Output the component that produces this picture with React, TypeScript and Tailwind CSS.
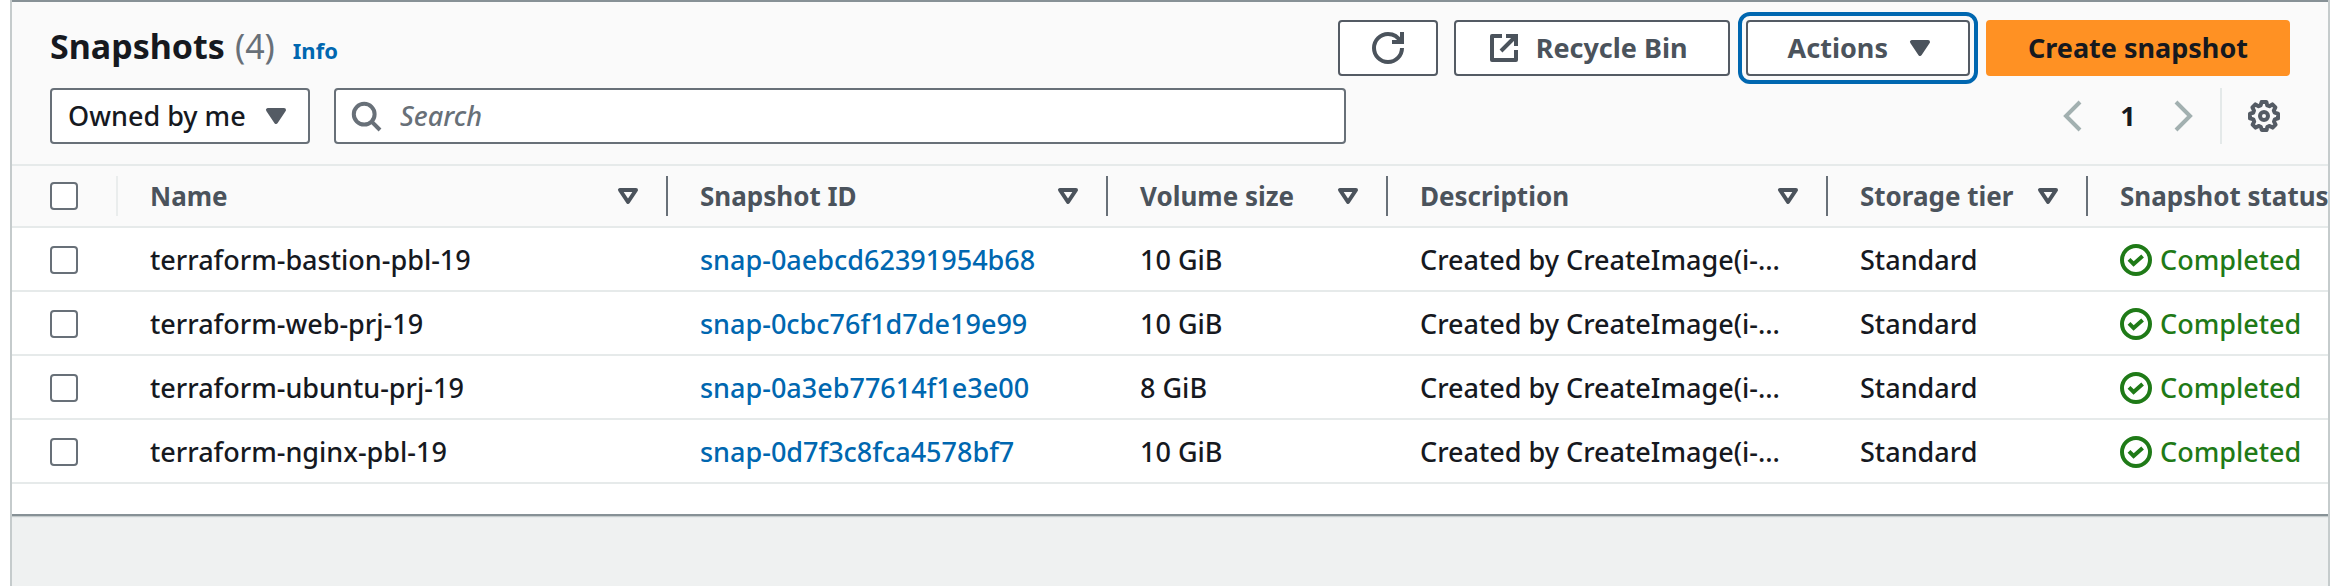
import React from "react";

const rows = [
  { name: "terraform-bastion-pbl-19", id: "snap-0aebcd62391954b68", size: "10 GiB" },
  { name: "terraform-web-prj-19", id: "snap-0cbc76f1d7de19e99", size: "10 GiB" },
  { name: "terraform-ubuntu-prj-19", id: "snap-0a3eb77614f1e3e00", size: "8 GiB" },
  { name: "terraform-nginx-pbl-19", id: "snap-0d7f3c8fca4578bf7", size: "10 GiB" },
];

const columns = ["Name", "Snapshot ID", "Volume size", "Description", "Storage tier", "Snapshot status"];

const buttonBase =
  "flex h-14 items-center justify-center rounded-[4px] border-2 border-[#545b64] bg-white text-[27px] font-bold text-[#4b535c]";

const cell = "p-0 pt-0.5 pl-8";

function RefreshIcon() {
  return (
    <svg viewBox="0 0 16 16" className="size-8" fill="none" stroke="currentColor" strokeWidth="2">
      <path d="M15 8c0 3.87-3.13 7-7 7s-7-3.13-7-7 3.13-7 7-7c2.79 0 5.2 1.63 6.33 4" />
      <path d="M15 0v5h-5" />
    </svg>
  );
}

function ExternalIcon() {
  return (
    <svg viewBox="0 0 16 16" className="size-8" fill="none" stroke="currentColor" strokeWidth="2">
      <path strokeLinejoin="round" d="M14 9v5H2V2h5" />
      <path d="M9 2h5v5M14 2 6.5 9.5" />
    </svg>
  );
}

function CaretFilled() {
  return (
    <svg viewBox="0 0 16 16" className="size-8 shrink-0" fill="currentColor" stroke="currentColor" strokeWidth="2">
      <path strokeLinejoin="round" d="M4 5h8l-4 6z" />
    </svg>
  );
}

function CaretOutline() {
  return (
    <svg viewBox="0 0 16 16" className="size-8 shrink-0" fill="none" stroke="currentColor" strokeWidth="2">
      <path strokeLinejoin="round" d="M4 5h8l-4 6z" />
    </svg>
  );
}

function SearchIcon() {
  return (
    <svg viewBox="0 0 16 16" className="size-8 shrink-0" fill="none" stroke="currentColor" strokeWidth="2">
      <circle cx="7.1" cy="7.1" r="5.2" />
      <path d="m15 15-4.300-4.300" />
    </svg>
  );
}

function GearIcon() {
  return (
    <svg viewBox="0 0 16 16" className="size-8" fill="none" stroke="currentColor" strokeWidth="2">
      <path
        strokeLinejoin="round"
        d="M15 9.200V6.800l-1.700-.5-.4-1 .8-1.600-1.500-1.500-1.500.9-1.100-.4L9.200 1H6.800l-.5 1.700-1 .4-1.600-.9-1.500 1.500.8 1.600-.4 1.100L1 6.800v2.400l1.700.5.4 1.100-.8 1.500 1.500 1.500 1.500-.8 1.100.4.5 1.600h2.400l.4-1.600 1.100-.4 1.500.8 1.500-1.500-.8-1.500.4-1.100z"
      />
      <circle cx="8" cy="8" r="2" />
    </svg>
  );
}

function CheckCircle() {
  return (
    <svg viewBox="0 0 16 16" className="size-8 shrink-0" fill="none" stroke="currentColor" strokeWidth="2">
      <circle cx="8" cy="8" r="7" />
      <path d="m4.500 7.700 2.300 2.300 4.500-4" />
    </svg>
  );
}

function Tick({ label }: { label: string }) {
  return (
    <input
      type="checkbox"
      aria-label={label}
      className="block size-7 appearance-none rounded-[4px] border-2 border-[#687078] bg-white"
    />
  );
}

export default function App() {
  return (
    <div className="min-h-screen bg-white pr-3 pl-2.5 font-['Noto_Sans',sans-serif] text-[27px] leading-10 font-medium text-[#16191f]">
      <main className="flex min-h-screen flex-col overflow-hidden border-x-2 border-[#c5cbcc] bg-[#eff1f1]">
        <section className="border-t-2 border-b-2 border-t-[#879196] border-b-[#879196] bg-white pb-7.5 shadow-[0_1px_1px_#c5cbcc]">
          <header className="bg-[#fafafa] pt-4.5 pr-9.5 pb-5 pl-9.5">
            <div className="flex items-start justify-between">
              <h1 className="flex items-baseline pt-0.5 text-[34px] leading-12 font-bold">
                Snapshots
                <span className="ml-2.5 font-normal text-[#687078]">(4)</span>
                <a href="#info" className="ml-4.5 text-[22px] text-[#0067b0]">Info</a>
              </h1>
              <div className="flex gap-4">
                <button aria-label="Refresh" className={`${buttonBase} w-25`}><RefreshIcon /></button>
                <button className={`${buttonBase} gap-4 pr-10 pl-8`}><ExternalIcon />Recycle Bin</button>
                <button className={`${buttonBase} gap-4 pr-8 pl-10 outline-4 outline-offset-4 outline-[#0067b0]`}>
                  Actions<CaretFilled />
                </button>
                <button className="flex h-14 items-center rounded-[4px] border-2 border-[#ff9123] bg-[#ff9123] px-10 text-[27px] font-bold">
                  Create snapshot
                </button>
              </div>
            </div>
            <div className="mt-3 flex items-center justify-between">
              <div className="flex flex-1 gap-6">
                <button className="flex h-14 w-65 items-center justify-between rounded-[4px] border-2 border-[#687078] bg-white px-4">
                  Owned by me
                  <span className="text-[#545b64]"><CaretFilled /></span>
                </button>
                <label className="flex h-14 w-full max-w-253 items-center gap-4.5 rounded-[4px] border-2 border-[#687078] bg-white px-3.5 text-[#687078]">
                  <SearchIcon />
                  <input type="search" aria-label="Search" placeholder="Search" className="w-full italic outline-none placeholder:text-[#687078]" />
                </label>
              </div>
              <nav aria-label="Pagination" className="flex h-14 items-center">
                <button aria-label="Previous page" className="text-[#a2b0b0]">
                  <svg viewBox="0 0 16 16" className="size-8" fill="none" stroke="currentColor" strokeWidth="2"><path d="M11 1 4 8l7 7" /></svg>
                </button>
                <button className="w-19 text-center font-bold">1</button>
                <button aria-label="Next page" className="text-[#a2b0b0]">
                  <svg viewBox="0 0 16 16" className="size-8" fill="none" stroke="currentColor" strokeWidth="2"><path d="m5 1 7 7-7 7" /></svg>
                </button>
                <span className="ml-5.5 h-14 w-0.5 bg-[#e4e9e9]" />
                <button aria-label="Preferences" className="mr-2.5 ml-6.5 text-[#545b64]"><GearIcon /></button>
              </nav>
            </div>
          </header>
          <table className="w-full table-fixed border-collapse">
            <colgroup>
              <col className="w-26.5" />
              <col className="w-137.5" />
              <col className="w-110" />
              <col className="w-70" />
              <col className="w-110" />
              <col className="w-65" />
              <col />
            </colgroup>
            <thead>
              <tr className="h-15.5 border-y-2 border-[#e6eaea] bg-[#fafafa] text-[#4b535c]">
                <th className="p-0">
                  <div className="flex h-10 items-center border-r-2 border-[#eaeded] pl-9.5"><Tick label="Select all" /></div>
                </th>
                {columns.map((c, i) => (
                  <th key={c} className="p-0 text-left text-[26px] font-bold whitespace-nowrap">
                    <div className={`flex h-10 items-center justify-between pl-8 ${i < 5 ? "border-r-2 border-[#687078] pr-5.5" : ""}`}>
                      {c}
                      {i < 5 && <CaretOutline />}
                    </div>
                  </th>
                ))}
              </tr>
            </thead>
            <tbody>
              {rows.map((r) => (
                <tr key={r.id} className="h-16 border-b-2 border-[#e6eaea]">
                  <td className="p-0 pt-0.5 pl-9.5"><Tick label={`Select ${r.name}`} /></td>
                  <td className={cell}>{r.name}</td>
                  <td className={cell}><a href={`#${r.id}`} className="text-[#0067b0]">{r.id}</a></td>
                  <td className={cell}>{r.size}</td>
                  <td className={cell}>Created by CreateImage(i-…</td>
                  <td className={cell}>Standard</td>
                  <td className={cell}>
                    <span className="flex items-center gap-2 text-[#1f7a17]"><CheckCircle />Completed</span>
                  </td>
                </tr>
              ))}
            </tbody>
          </table>
        </section>
      </main>
    </div>
  );
}
